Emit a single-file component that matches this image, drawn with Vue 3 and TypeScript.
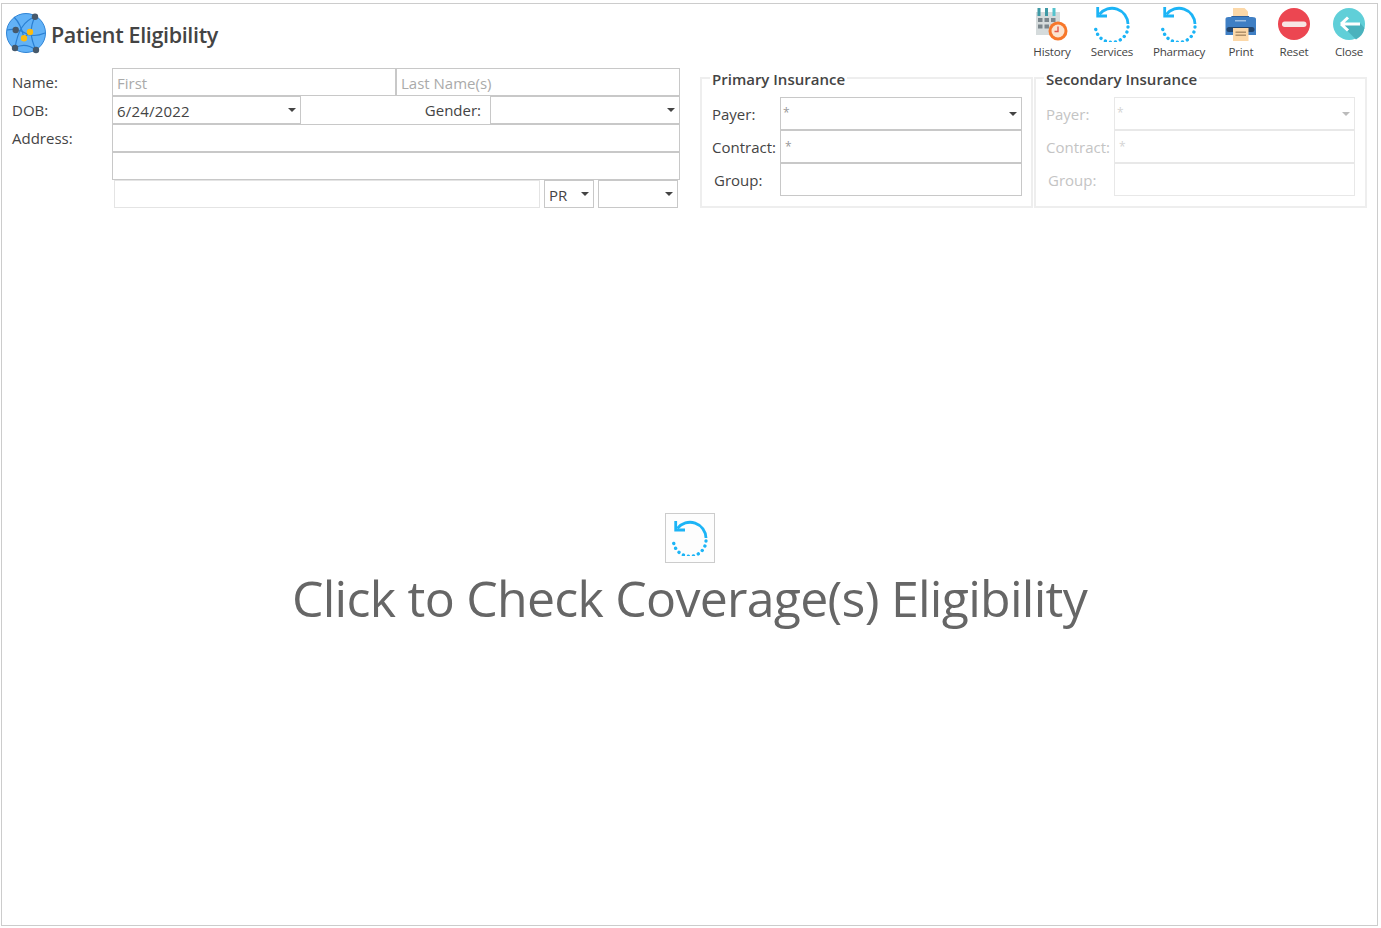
<script setup lang="ts">
interface Tool { label: string; icon: string }
const tools: Tool[] = [
  { label: 'History', icon: 'history' },
  { label: 'Services', icon: 'refresh' },
  { label: 'Pharmacy', icon: 'refresh' },
  { label: 'Print', icon: 'print' },
  { label: 'Reset', icon: 'reset' },
  { label: 'Close', icon: 'close' },
]
interface Plan { title: string; off: boolean }
const plans: Plan[] = [
  { title: 'Primary Insurance', off: false },
  { title: 'Secondary Insurance', off: true },
]
</script>

<template>
  <div class="window">
    <svg class="defs" width="0" height="0" aria-hidden="true">
      <symbol id="refresh" viewBox="-18 -18 36 36">
        <path d="M-12.6 -9.6A16 16 0 0 1 16 0" fill="none" stroke="#1cb4f6" stroke-width="2.8" />
        <path d="M-14.3 -17V-8H-5" fill="none" stroke="#1cb4f6" stroke-width="2.8" />
        <path d="M16 3A16 16 0 0 1 -16.6 1" fill="none" stroke="#1cb4f6" stroke-width="3.4" stroke-linecap="round" stroke-dasharray="0.01 5.15" />
      </symbol>
    </svg>

    <header class="top">
      <div class="brand">
        <svg class="globe" width="42" height="42" viewBox="0 0 42 42">
          <circle cx="21" cy="21" r="19.5" fill="#62b2f7" stroke="#2f84d6" stroke-width="1" />
          <g fill="none" stroke="#2a7fd2" stroke-width="1.2">
            <path d="M2 18Q12 16 20 21T40 21" />
            <path d="M30 5Q14 10 10 36" />
            <path d="M30 5Q22 20 31 38" />
            <path d="M10 36Q20 30 31 38" />
            <path d="M9 5Q16 12 19 26" />
            <path d="M25 20L19 26" />
          </g>
          <circle cx="30" cy="4.700" r="3.200" fill="#46596b" />
          <circle cx="10.700" cy="18" r="3.200" fill="#46596b" />
          <circle cx="10" cy="36" r="3.200" fill="#46596b" />
          <circle cx="31" cy="38" r="3.200" fill="#46596b" />
          <circle cx="25" cy="20" r="3.200" fill="#fdbb10" />
          <circle cx="19" cy="26.300" r="3.200" fill="#fdbb10" />
        </svg>
        <h1 class="title">Patient Eligibility</h1>
      </div>
      <nav class="tools">
        <div v-for="t in tools" :key="t.label" class="tool" :class="`tool-${t.label.toLowerCase()}`">
          <svg v-if="t.icon === 'refresh'" class="tool-icon" width="36" height="36"><use href="#refresh" /></svg>
          <svg v-else-if="t.icon === 'history'" class="tool-icon" width="36" height="36" viewBox="0 0 36 36">
            <rect x="2" y="6" width="24" height="23" fill="#d5dbdc" />
            <rect x="3.500" y="2" width="3" height="8" fill="#3f9aa6" />
            <rect x="11" y="2" width="3" height="8" fill="#3f9aa6" />
            <rect x="18.500" y="2" width="3" height="8" fill="#54c3cd" />
            <g fill="#7b868c">
              <rect x="4" y="12" width="4.500" height="4" /><rect x="10.500" y="12" width="4.500" height="4" /><rect x="17" y="12" width="4.500" height="4" />
              <rect x="4" y="18.500" width="4.500" height="4" /><rect x="10.500" y="18.500" width="4.500" height="4" />
            </g>
            <circle cx="24" cy="25" r="9.500" fill="#f7772a" />
            <circle cx="24" cy="25" r="6.500" fill="#fbe3cf" />
            <path d="M24 20.500V25.500H20.500" fill="none" stroke="#e2574c" stroke-width="1.400" />
          </svg>
          <svg v-else-if="t.icon === 'print'" class="tool-icon" width="36" height="36" viewBox="0 0 36 36">
            <path d="M10 2H21.500L25 5.500V12H10Z" fill="#fcd8a8" />
            <path d="M8.500 10H26L26.500 12H8Z" fill="#2c5f9e" />
            <path d="M2.500 13Q2.500 11 5.500 11H29Q33 11 33 13V29H2.500Z" fill="#3f7fc4" />
            <rect x="12" y="14" width="11" height="1.500" fill="#9bc0e6" />
            <rect x="3.500" y="21" width="28" height="5" rx="2.500" fill="#22466f" />
            <rect x="10" y="22" width="15.500" height="13" fill="#fcd8a8" />
            <rect x="12.500" y="25.500" width="10.500" height="1.400" fill="#a98a63" />
            <rect x="12.500" y="28.500" width="10.500" height="1.400" fill="#a98a63" />
          </svg>
          <svg v-else-if="t.icon === 'reset'" class="tool-icon" width="36" height="36" viewBox="0 0 36 36">
            <circle cx="18" cy="18" r="16" fill="#ec4651" />
            <rect x="6" y="15.500" width="24.500" height="5.500" rx="2.700" fill="#f7e6e4" />
          </svg>
          <svg v-else class="tool-icon" width="36" height="36" viewBox="0 0 36 36">
            <circle cx="18" cy="18" r="16" fill="#60cfd8" />
            <path d="M11 19.500L25 33.400A16 16 0 0 0 33.500 22L29 17H14Z" fill="#4ab2bd" />
            <path d="M10 18L17 11.500M10 18L17 24.500M10 18H29" fill="none" stroke="#fff" stroke-width="3" />
          </svg>
          <span class="tool-label">{{ t.label }}</span>
        </div>
      </nav>
    </header>

    <section class="forms">
      <div class="person">
        <div class="row">
          <label class="lbl">Name:</label>
          <div class="fields">
            <div class="box grow ph">First</div>
            <div class="box grow ph">Last Name(s)</div>
          </div>
        </div>
        <div class="row">
          <label class="lbl">DOB:</label>
          <div class="fields">
            <div class="box sel dob"><span class="date">6/24/2022</span><i class="caret" /></div>
            <label class="gender">Gender:</label>
            <div class="box sel gender-sel"><i class="caret" /></div>
          </div>
        </div>
        <div class="row">
          <label class="lbl">Address:</label>
          <div class="fields"><div class="box grow" /></div>
        </div>
        <div class="row">
          <span class="lbl" />
          <div class="fields"><div class="box grow" /></div>
        </div>
        <div class="row">
          <span class="lbl" />
          <div class="fields city">
            <div class="box grow light" />
            <div class="box sel st"><span>PR</span><i class="caret" /></div>
            <div class="box sel zip"><i class="caret" /></div>
          </div>
        </div>
      </div>

      <div class="plans">
        <fieldset v-for="p in plans" :key="p.title" class="plan" :class="{ off: p.off }">
          <legend>{{ p.title }}</legend>
          <div class="plan-row">
            <label class="plan-lbl">Payer:</label>
            <div class="box sel plan-box"><span class="star">*</span><i class="caret" /></div>
          </div>
          <div class="plan-row">
            <label class="plan-lbl">Contract:</label>
            <div class="box plan-box"><span class="star star-in">*</span></div>
          </div>
          <div class="plan-row">
            <label class="plan-lbl group">Group:</label>
            <div class="box plan-box" />
          </div>
        </fieldset>
      </div>
    </section>

    <main class="check">
      <button class="check-btn" type="button" aria-label="Check">
        <svg width="36" height="36"><use href="#refresh" /></svg>
      </button>
      <p class="check-text">Click to Check Coverage(s) Eligibility</p>
    </main>
  </div>
</template>

<style>
html, body { margin: 0; background: #fff; }
</style>

<style scoped>
.window {
  box-sizing: border-box;
  width: 1377px;
  height: 923px;
  margin: 3px 0 0 1px;
  border: 1px solid #cccccc;
  display: flex;
  flex-direction: column;
  font-family: "Open Sans", "Noto Sans", sans-serif;
  font-size: 15px;
  color: #444;
  background: #fff;
}
.defs { position: absolute; }
.top {
  height: 64px;
  flex: none;
  display: flex;
  justify-content: space-between;
}
.brand { display: flex; align-items: flex-start; padding: 8px 0 0 3px; }
.globe { display: block; flex: none; }
.title {
  margin: 1px 0 0 4px;
  font-size: 21.5px;
  font-weight: 600;
  line-height: 44px;
  letter-spacing: -0.35px;
  color: #444;
}
.tools { display: flex; padding-top: 2px; }
.tool { display: flex; flex-direction: column; align-items: center; }
.tool-history { width: 58px; }
.tool-services { width: 62px; }
.tool-pharmacy { width: 72px; }
.tool-print { width: 52px; }
.tool-reset { width: 54px; }
.tool-close { width: 56px; }
.tool-icon { display: block; flex: none; }
.tool-label { font-size: 11.6px; line-height: 20px; letter-spacing: -0.2px; color: #444; }

.forms { flex: none; display: flex; height: 140px; padding-left: 10px; }
.person { width: 668px; flex: none; }
.row { display: flex; height: 28px; }
.lbl { width: 100px; flex: none; line-height: 29px; }
.fields { flex: 1; display: flex; min-width: 0; }
.box {
  box-sizing: border-box;
  border: 1px solid #c8c8c8;
  height: 28px;
  background: #fff;
  padding: 0 4px;
  line-height: 29px;
}
.grow { flex: 1 1 0; min-width: 0; }
.ph { color: #aaa; }
.light { border-color: #e4e4e4; }
.sel { display: flex; align-items: center; justify-content: flex-end; padding-right: 4px; }
.sel span { margin-right: auto; line-height: 29px; padding-top: 2px; }
.date { letter-spacing: 0.2px; }
.caret {
  width: 0;
  height: 0;
  border-left: 4px solid transparent;
  border-right: 4px solid transparent;
  border-top: 4px solid #444;
  flex: none;
}
.dob { width: 189px; }
.gender { width: 180px; text-align: right; line-height: 29px; }
.gender-sel { width: 190px; margin-left: 9px; }
.city { padding: 0 2px; gap: 4px; }
.st { width: 50px; }
.zip { width: 80px; }

.plans { display: flex; margin-left: 20px; align-items: flex-start; gap: 1px; }
.plan {
  box-sizing: border-box;
  width: 333px;
  height: 140px;
  margin: 0;
  padding: 9px 9px 0 10px;
  border: 2px solid #eeeeee;
  min-width: 0;
}
.plan.off { padding-right: 10px; }
.plan legend {
  margin-left: -2px;
  padding: 0 2px;
  height: 20px;
  line-height: 22px;
  font-weight: 600;
  color: #444;
}
.plan-row { display: flex; height: 33px; align-items: center; }
.plan-lbl { width: 68px; flex: none; line-height: 35px; height: 33px; }
.plan-lbl.group { padding-left: 2px; box-sizing: border-box; }
.plan-box { flex: 1; height: 33px; line-height: 31px; padding-left: 3px; }
.plan-box.sel { align-items: center; }
.star { color: #999; font-size: 12px; align-self: flex-start; margin-right: auto; }
.sel .star { line-height: 29px; padding-top: 0; margin-left: -1px; }
.star-in { display: block; margin-left: 1px; }
.plan.off .plan-lbl { color: #c4c4c4; }
.plan.off .box { border-color: #e8e8e8; }
.plan.off .star { color: #d4d4d4; }
.plan.off .caret { border-top-color: #bbb; }

.check {
  flex: 1;
  min-height: 0;
  display: flex;
  flex-direction: column;
  align-items: center;
  padding-top: 305px;
}
.check-btn {
  box-sizing: border-box;
  width: 50px;
  height: 50px;
  flex: none;
  padding: 0;
  border: 1px solid #cccccc;
  background: #fdfdfd;
  display: flex;
  align-items: center;
  justify-content: center;
}
.check-btn svg { display: block; }
.check-text {
  margin: 2px 0 0;
  font-size: 50px;
  line-height: 66px;
  letter-spacing: -0.73px;
  color: #666;
  white-space: nowrap;
}
</style>
